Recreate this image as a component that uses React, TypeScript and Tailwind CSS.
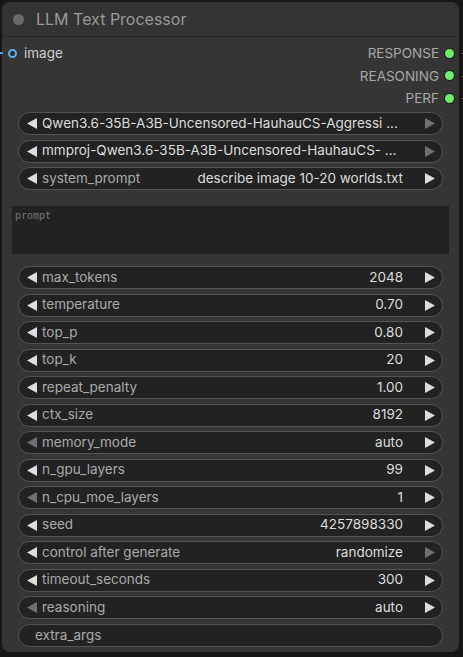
type Arrow = "on" | "dim" | "none"

interface RowProps {
  label: string
  value?: string
  left?: Arrow
  right?: Arrow
  combo?: boolean
}

function Tri({ dir, state }: { dir: "l" | "r"; state: Arrow }) {
  if (state === "none") return <span className="w-[10px]" />
  const fill = state === "on" ? "#dddddd" : "#707070"
  return (
    <svg width="10" height="11" viewBox="0 0 10 11" className="shrink-0">
      {dir === "l" ? <polygon points="10,0 10,11 0,5.5" fill={fill} /> : <polygon points="0,0 0,11 10,5.5" fill={fill} />}
    </svg>
  )
}

function Row({ label, value, left = "on", right = "on", combo }: RowProps) {
  return (
    <div className="flex items-center h-[23px] mx-[16px] rounded-full border border-[#555555] bg-[#222222] pl-[8px] pr-[7px] text-[13.5px] leading-none">
      <Tri dir="l" state={left} />
      {combo ? (
        <span className="ml-[5px] flex-1 whitespace-nowrap text-[#dddddd]">{label}</span>
      ) : (
        <>
          <span className="ml-[5px] text-[#aaaaaa] whitespace-nowrap">{label}</span>
          <span className="flex-1 text-right text-[#dddddd] whitespace-nowrap">{value}</span>
        </>
      )}
      <span className="ml-[22px]">
        <Tri dir="r" state={right} />
      </span>
    </div>
  )
}

const params: RowProps[] = [
  { label: "max_tokens", value: "2048" },
  { label: "temperature", value: "0.70" },
  { label: "top_p", value: "0.80" },
  { label: "top_k", value: "20" },
  { label: "repeat_penalty", value: "1.00" },
  { label: "ctx_size", value: "8192" },
  { label: "memory_mode", value: "auto", left: "dim" },
  { label: "n_gpu_layers", value: "99" },
  { label: "n_cpu_moe_layers", value: "1", left: "dim" },
  { label: "seed", value: "4257898330" },
  { label: "control after generate", value: "randomize", right: "dim" },
  { label: "timeout_seconds", value: "300" },
  { label: "reasoning", value: "auto", left: "dim" },
]

const outputs = ["RESPONSE", "REASONING", "PERF"]

export default function App() {
  return (
    <div
      className="w-[463px] h-[657px] bg-[#161616] pt-[2px] pl-[2px] overflow-hidden"
      style={{ fontFamily: "Inter, 'Noto Sans', sans-serif" }}
    >
      <div className="relative w-[457px] h-[650px] rounded-[8px] bg-[#353535] flex flex-col">
        {/* title */}
        <div className="h-[35px] flex items-center rounded-t-[8px] bg-[#333333] border-b border-[#282828] pl-[11px]">
          <span className="w-[11px] h-[11px] rounded-full bg-[#6a6a6a]" />
          <span className="ml-[12px] text-[16px] text-[#9a9a9a]">LLM Text Processor</span>
        </div>

        {/* slots */}
        <div className="flex justify-between pt-[5px] mb-[2.5px]">
          <div className="flex items-start">
            <div className="relative h-[22.5px] flex items-center pl-[6px]">
              <span className="absolute left-[-2px] top-[10px] w-[3px] h-[2px] bg-[#4aa3e8]" />
              <span className="w-[9px] h-[9px] rounded-full border-[2.5px] border-[#5cb0f0] bg-[#2a2a2a]" />
              <span className="ml-[7px] text-[13.5px] text-[#cfcfcf]">image</span>
            </div>
          </div>
          <div className="flex flex-col items-end">
            {outputs.map((o) => (
              <div key={o} className="relative h-[22.5px] flex items-center pr-[5px]">
                <span className="text-[13.5px] text-[#a8a8a8]">{o}</span>
                <span className="ml-[6px] w-[9px] h-[9px] rounded-full bg-[#6fec6a] ring-1 ring-[#1f1f1f]" />
                <span className="absolute right-[-6px] top-[11px] w-[3px] h-[1px] bg-[#777777]" />
              </div>
            ))}
          </div>
        </div>

        {/* combos */}
        <div className="flex flex-col gap-[4.5px]">
          <Row label="Qwen3.6-35B-A3B-Uncensored-HauhauCS-Aggressi ..." combo right="dim" />
          <Row label="mmproj-Qwen3.6-35B-A3B-Uncensored-HauhauCS- ..." combo right="dim" />
          <Row label="system_prompt" value="describe image 10-20 worlds.txt" />
        </div>

        {/* prompt */}
        <div className="mx-[10px] mt-[16px] h-[48px] bg-[#222222] px-[3px] pt-[5px]">
          <div className="text-[10px] leading-[10px] text-[#777777]" style={{ fontFamily: "'DejaVu Sans Mono', monospace" }}>
            prompt
          </div>
        </div>

        {/* params */}
        <div className="flex flex-col gap-[4.5px] mt-[12px]">
          {params.map((p) => (
            <Row key={p.label} {...p} />
          ))}
          <div className="flex items-center h-[23px] mx-[16px] rounded-full border border-[#555555] bg-[#222222] pl-[16px] text-[13.5px] text-[#aaaaaa]">
            extra_args
          </div>
        </div>
      </div>
    </div>
  )
}
